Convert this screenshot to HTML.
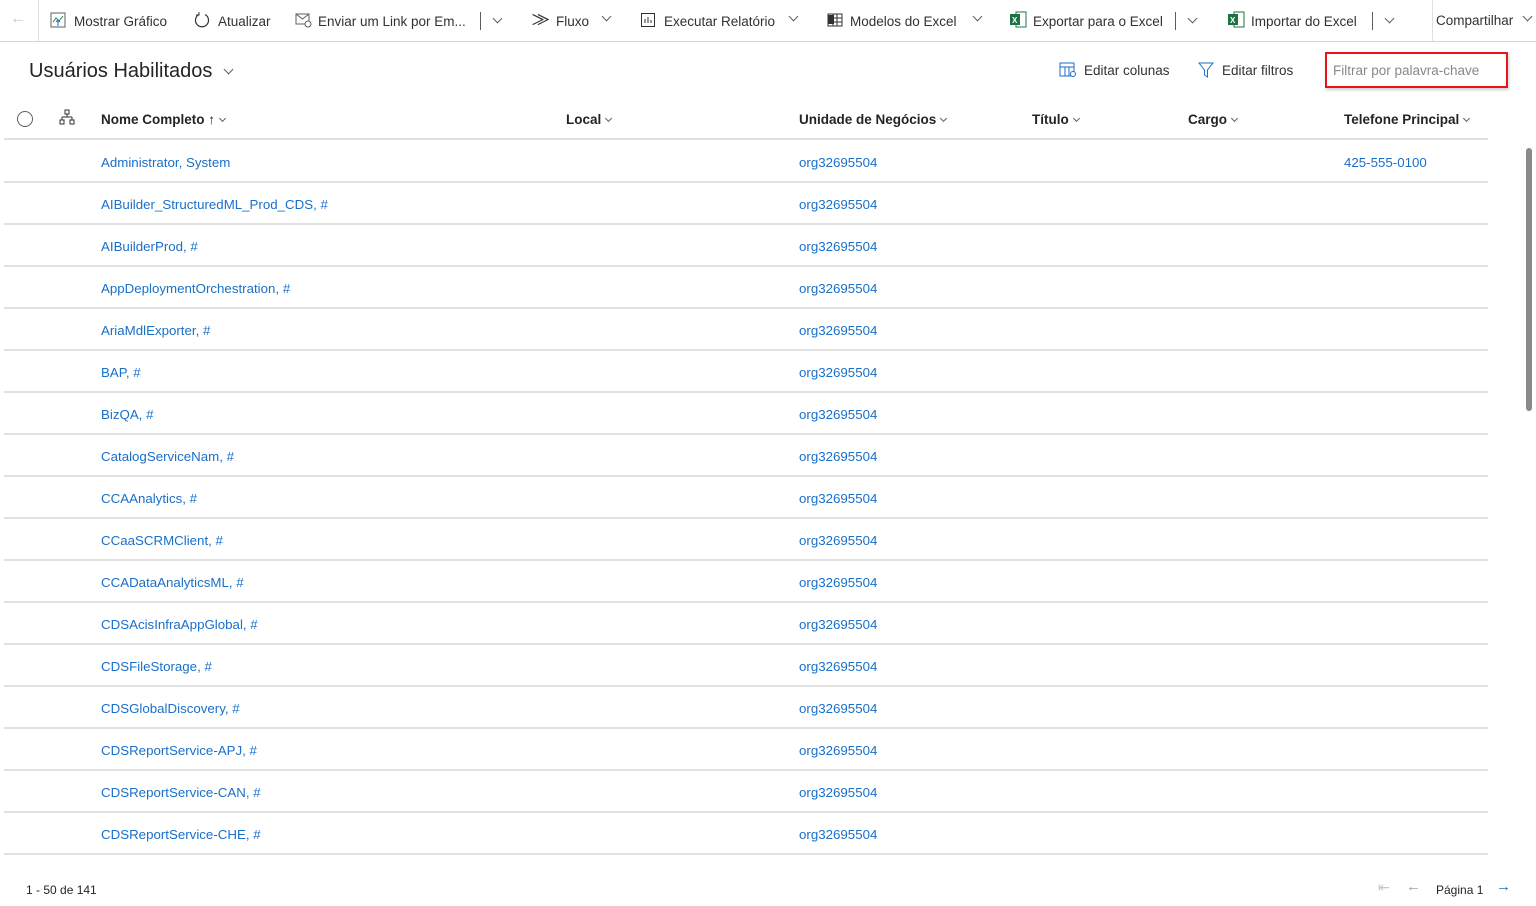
<!DOCTYPE html>
<html><head><meta charset="utf-8"><style>
*{margin:0;padding:0;box-sizing:border-box}
body{width:1536px;height:906px;overflow:hidden;background:#fff;font-family:"Liberation Sans",sans-serif;color:#242424;position:relative}
.a{position:absolute;white-space:nowrap}
.tb{font-size:13.5px;color:#323130;top:14px}
.chev{display:inline-block;width:7px;height:7px;border-right:1px solid #605e5c;border-bottom:1px solid #605e5c;transform:rotate(45deg);}
.sep{position:absolute;width:1px;height:18px;background:#605e5c;top:12px}
.hd{font-size:13.5px;font-weight:bold;color:#242424;top:112px}
.hc{display:inline-block;width:5px;height:5px;border-right:1px solid #605e5c;border-bottom:1px solid #605e5c;transform:rotate(45deg);margin-left:5px;position:relative;top:-3px}
.ln{color:#1a6fc9;font-size:13.3px;margin-top:1px}
.row{position:absolute;left:4px;width:1484px;height:2px;background:#e1e1e1}
</style></head><body>
<div class="a" style="left:0;top:41px;width:1536px;height:1px;background:#d6d6d6"></div>
<div class="a" style="left:38px;top:0;width:1px;height:41px;background:#e1e1e1"></div>
<div class="a" style="left:1432px;top:0;width:1px;height:41px;background:#e1e1e1"></div>
<div class="a" style="left:10px;top:10px;font-size:16px;color:#c8c6c4">←</div>
<svg class="a" style="left:50px;top:12px" width="16" height="16"><rect x="1" y="1" width="14" height="14" fill="none" stroke="#605e5c"/><path d="M3 10l3-4 3 3 4-5" stroke="#2a8a3a" fill="none"/><path d="M8 14V8m-2 2l2-2 2 2" stroke="#1a6fc9" fill="none"/></svg>
<div class="a tb" style="left:74px">Mostrar Gráfico</div>
<svg class="a" style="left:193px;top:11px" width="18" height="18"><path d="M12 3.5A6.5 6.5 0 1 1 6 3.5" stroke="#323130" fill="none" stroke-width="1.2"/><path d="M6 1v3H3" stroke="#323130" fill="none"/></svg>
<div class="a tb" style="left:218px">Atualizar</div>
<svg class="a" style="left:295px;top:13px" width="18" height="15"><rect x="1" y="1" width="13" height="10" fill="none" stroke="#605e5c"/><path d="M1 1l6.5 5 6.5-5" stroke="#605e5c" fill="none"/><circle cx="13" cy="11" r="3" fill="#fff" stroke="#605e5c"/></svg>
<div class="a tb" style="left:318px">Enviar um Link por Em...</div>
<div class="sep" style="left:480px"></div>
<span class="a chev" style="left:494px;top:15px"></span>
<div class="a tb" style="left:532px;font-size:15px;top:11px">⨠</div>
<div class="a tb" style="left:556px">Fluxo</div>
<span class="a chev" style="left:603px;top:13px"></span>
<svg class="a" style="left:640px;top:12px" width="16" height="16"><rect x="1.5" y="1.5" width="13" height="13" fill="none" stroke="#323130"/><path d="M5 11V7M8 11V5M11 11V8" stroke="#323130"/></svg>
<div class="a tb" style="left:664px">Executar Relatório</div>
<span class="a chev" style="left:790px;top:13px"></span>
<svg class="a" style="left:827px;top:12px" width="16" height="16"><rect x="1" y="2" width="14" height="12" fill="none" stroke="#323130"/><path d="M1 6h14M1 10h14M6 2v12M10 2v12" stroke="#323130"/><rect x="1" y="3" width="6" height="9" fill="#323130"/></svg>
<div class="a tb" style="left:850px">Modelos do Excel</div>
<span class="a chev" style="left:974px;top:13px"></span>
<svg class="a" style="left:1010px;top:11px" width="17" height="17"><rect x="6" y="1" width="10" height="15" fill="#fff" stroke="#217346"/><rect x="0" y="3" width="10" height="11" fill="#1e7145"/><text x="2" y="12" font-size="8" fill="#fff" font-family="Liberation Sans" font-weight="bold">X</text></svg>
<div class="a tb" style="left:1033px">Exportar para o Excel</div>
<div class="sep" style="left:1175px"></div>
<span class="a chev" style="left:1189px;top:15px"></span>
<svg class="a" style="left:1228px;top:11px" width="17" height="17"><rect x="6" y="1" width="10" height="15" fill="#fff" stroke="#217346"/><rect x="0" y="3" width="10" height="11" fill="#1e7145"/><text x="2" y="12" font-size="8" fill="#fff" font-family="Liberation Sans" font-weight="bold">X</text></svg>
<div class="a tb" style="left:1251px">Importar do Excel</div>
<div class="sep" style="left:1372px"></div>
<span class="a chev" style="left:1386px;top:15px"></span>
<div class="a tb" style="left:1436px;top:13px">Compartilhar</div>
<span class="a chev" style="left:1524px;top:13px"></span>
<div class="a" style="left:29px;top:60px;font-size:20px;color:#242424">Usuários Habilitados</div>
<span class="a chev" style="left:225px;top:66px"></span>
<svg class="a" style="left:1059px;top:62px" width="18" height="16"><rect x="1" y="1" width="14" height="13" fill="none" stroke="#1a6fc9"/><path d="M1 5h14M6 5v9M10 5v9" stroke="#1a6fc9"/><circle cx="14" cy="12" r="2.5" fill="#fff" stroke="#1a6fc9"/></svg>
<div class="a" style="left:1084px;top:63px;font-size:13.5px;color:#323130">Editar colunas</div>
<svg class="a" style="left:1198px;top:62px" width="16" height="16"><path d="M1 1h14l-5.5 7v7l-3-2V8z" fill="none" stroke="#1a6fc9"/></svg>
<div class="a" style="left:1222px;top:63px;font-size:13.5px;color:#323130">Editar filtros</div>
<div class="a" style="left:1325px;top:52px;width:183px;height:36px;border:2px solid #e8141c;box-shadow:1px 2px 3px rgba(0,0,0,.2)"></div>
<div class="a" style="left:1333px;top:63px;font-size:13.5px;color:#8a8886">Filtrar por palavra-chave</div>
<div class="a" style="left:17px;top:111px;width:16px;height:16px;border:1px solid #605e5c;border-radius:50%"></div>
<svg class="a" style="left:59px;top:109px" width="16" height="16"><rect x="6" y="1" width="4" height="4" fill="none" stroke="#323130"/><path d="M8 5v3M3 8h10M3 8v3M13 8v3" stroke="#323130" fill="none"/><rect x="1" y="11" width="4" height="4" fill="none" stroke="#323130"/><rect x="11" y="11" width="4" height="4" fill="none" stroke="#323130"/></svg>
<div class="a hd" style="left:101px">Nome Completo <span style="font-weight:normal">↑</span><span class="hc"></span></div>
<div class="a hd" style="left:566px">Local<span class="hc"></span></div>
<div class="a hd" style="left:799px">Unidade de Negócios<span class="hc"></span></div>
<div class="a hd" style="left:1032px">Título<span class="hc"></span></div>
<div class="a hd" style="left:1188px">Cargo<span class="hc"></span></div>
<div class="a hd" style="left:1344px">Telefone Principal<span class="hc"></span></div>
<div class="row" style="top:138px"></div>
<div class="a ln" style="left:101px;top:154px">Administrator, System</div><div class="a ln" style="left:799px;top:154px">org32695504</div><div class="a ln" style="left:1344px;top:154px">425-555-0100</div><div class="row" style="top:181px"></div>
<div class="a ln" style="left:101px;top:196px">AIBuilder_StructuredML_Prod_CDS, #</div><div class="a ln" style="left:799px;top:196px">org32695504</div><div class="row" style="top:223px"></div>
<div class="a ln" style="left:101px;top:238px">AIBuilderProd, #</div><div class="a ln" style="left:799px;top:238px">org32695504</div><div class="row" style="top:265px"></div>
<div class="a ln" style="left:101px;top:280px">AppDeploymentOrchestration, #</div><div class="a ln" style="left:799px;top:280px">org32695504</div><div class="row" style="top:307px"></div>
<div class="a ln" style="left:101px;top:322px">AriaMdlExporter, #</div><div class="a ln" style="left:799px;top:322px">org32695504</div><div class="row" style="top:349px"></div>
<div class="a ln" style="left:101px;top:364px">BAP, #</div><div class="a ln" style="left:799px;top:364px">org32695504</div><div class="row" style="top:391px"></div>
<div class="a ln" style="left:101px;top:406px">BizQA, #</div><div class="a ln" style="left:799px;top:406px">org32695504</div><div class="row" style="top:433px"></div>
<div class="a ln" style="left:101px;top:448px">CatalogServiceNam, #</div><div class="a ln" style="left:799px;top:448px">org32695504</div><div class="row" style="top:475px"></div>
<div class="a ln" style="left:101px;top:490px">CCAAnalytics, #</div><div class="a ln" style="left:799px;top:490px">org32695504</div><div class="row" style="top:517px"></div>
<div class="a ln" style="left:101px;top:532px">CCaaSCRMClient, #</div><div class="a ln" style="left:799px;top:532px">org32695504</div><div class="row" style="top:559px"></div>
<div class="a ln" style="left:101px;top:574px">CCADataAnalyticsML, #</div><div class="a ln" style="left:799px;top:574px">org32695504</div><div class="row" style="top:601px"></div>
<div class="a ln" style="left:101px;top:616px">CDSAcisInfraAppGlobal, #</div><div class="a ln" style="left:799px;top:616px">org32695504</div><div class="row" style="top:643px"></div>
<div class="a ln" style="left:101px;top:658px">CDSFileStorage, #</div><div class="a ln" style="left:799px;top:658px">org32695504</div><div class="row" style="top:685px"></div>
<div class="a ln" style="left:101px;top:700px">CDSGlobalDiscovery, #</div><div class="a ln" style="left:799px;top:700px">org32695504</div><div class="row" style="top:727px"></div>
<div class="a ln" style="left:101px;top:742px">CDSReportService-APJ, #</div><div class="a ln" style="left:799px;top:742px">org32695504</div><div class="row" style="top:769px"></div>
<div class="a ln" style="left:101px;top:784px">CDSReportService-CAN, #</div><div class="a ln" style="left:799px;top:784px">org32695504</div><div class="row" style="top:811px"></div>
<div class="a ln" style="left:101px;top:826px">CDSReportService-CHE, #</div><div class="a ln" style="left:799px;top:826px">org32695504</div><div class="row" style="top:853px"></div>
<div class="a" style="left:1526px;top:148px;width:6px;height:263px;background:#8a8a8a;border-radius:3px"></div>
<div class="a" style="left:26px;top:883px;font-size:12px;color:#242424">1 - 50 de 141</div>
<div class="a" style="left:1378px;top:879px;font-size:14px;color:#c8c6c4">⇤</div>
<div class="a" style="left:1406px;top:878px;font-size:15px;color:#a19f9d">←</div>
<div class="a" style="left:1436px;top:883px;font-size:12px;color:#242424">Página 1</div>
<div class="a" style="left:1496px;top:878px;font-size:15px;color:#1a6fc9">→</div>
</body></html>
